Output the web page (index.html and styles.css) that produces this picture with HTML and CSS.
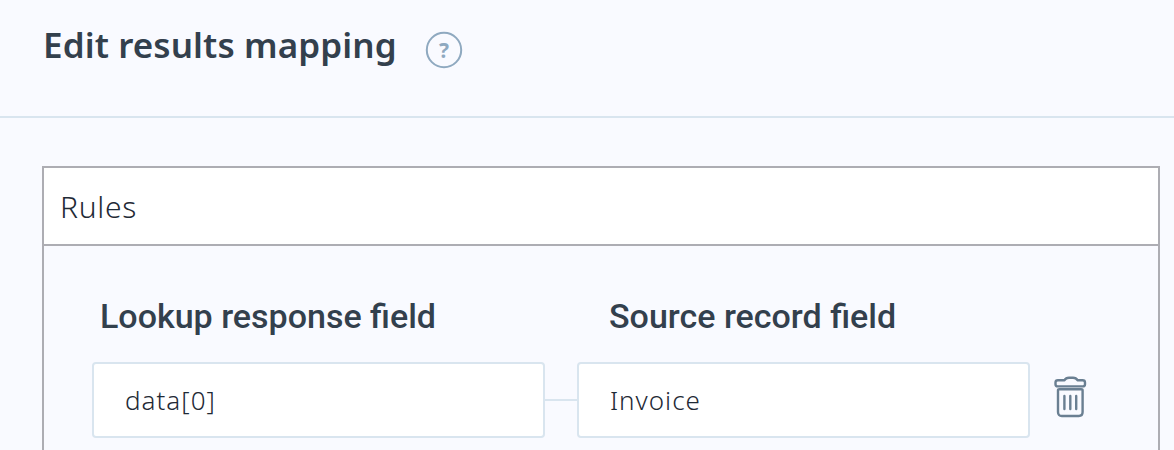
FILE: index.html
```html
<!DOCTYPE html>
<html lang="en">
<head>
<meta charset="utf-8">
<title>Edit results mapping</title>
<link rel="stylesheet" href="styles.css">
</head>
<body>
<header class="page-header">
  <h1 class="title">Edit results mapping</h1>
  <svg class="help" width="38" height="38" viewBox="0 0 38 38" aria-hidden="true">
    <circle cx="19" cy="19" r="17.2" fill="none" stroke="#8fa9c0" stroke-width="2"/>
    <text x="19" y="26.5" text-anchor="middle" class="help-mark">?</text>
  </svg>
</header>
<main class="content">
  <section class="panel">
    <div class="panel-title">Rules</div>
    <div class="panel-body">
      <div class="labels">
        <div class="label label-a">Lookup response field</div>
        <div class="label">Source record field</div>
      </div>
      <div class="row">
        <div class="field">data[0]</div>
        <div class="link"></div>
        <div class="field">Invoice</div>
        <svg class="trash" width="34" height="42" viewBox="0 0 34 42" aria-hidden="true">
          <g fill="none" stroke="#6a7f92" stroke-width="2.4" stroke-linecap="round" stroke-linejoin="round">
            <path d="M10.5 4.2 C11.5 2.4 13 1.8 15 1.8 H19 C21 1.8 22.5 2.4 23.5 4.2 H28.5 C30.2 4.2 31 5 31 6.4 V8.2 C31 9.6 30.3 10.4 28.8 10.4 H3.7 C2.2 10.4 1.5 9.6 1.5 8.2 V6.4 C1.5 5 2.3 4.2 4 4.2 Z"/>
            <path d="M4 14.4 C4 13.6 4.6 13.2 5.4 13.2 H27.2 C28 13.2 28.6 13.6 28.6 14.4 V36 C28.6 38.6 27.2 40 24.8 40 H7.8 C5.4 40 4 38.6 4 36 Z"/>
            <path d="M10.4 20 V33 M16.3 20 V33 M22.2 20 V33"/>
          </g>
        </svg>
      </div>
    </div>
  </section>
</main>
</body>
</html>
```
FILE: styles.css
```css
html, body {
  margin: 0;
  padding: 0;
  height: 450px;
  overflow: hidden;
  background: #f9faff;
  color: #33404d;
  font-family: "Noto Sans", "Open Sans", sans-serif;
}
.page-header {
  box-sizing: border-box;
  height: 118px;
  padding: 0 0 0 43px;
  display: flex;
  align-items: flex-start;
  border-bottom: 2px solid #d9e5ef;
}
.title {
  margin: 23px 0 0;
  font-size: 35px;
  line-height: 44px;
  font-weight: 600;
  letter-spacing: 0.1px;
  color: #33404d;
}
.help {
  margin: 31px 0 0 28px;
}
.help-mark {
  font-family: "Noto Sans", sans-serif;
  font-size: 21px;
  font-weight: 700;
  fill: #8fa9c0;
}
.content {
  padding: 48px 14px 0 42px;
}
.panel {
  border: 2px solid #adadb3;
  border-bottom: 0;
  height: 300px;
}
.panel-title {
  box-sizing: border-box;
  height: 78px;
  background: #fff;
  border-bottom: 2px solid #adadb3;
  padding: 0 0 0 16px;
  font-size: 30px;
  font-weight: 300;
  line-height: 78px;
  letter-spacing: 0.7px;
  color: #1f2a36;
}
.panel-body {
  padding: 48px 0 0 48px;
}
.labels {
  display: flex;
  height: 44px;
  font-family: Roboto, sans-serif;
  font-weight: 500;
  font-size: 34px;
  line-height: 44px;
  color: #33404d;
}
.label-a {
  width: 517px;
  padding-left: 8px;
  box-sizing: border-box;
}
.row {
  display: flex;
  align-items: center;
  margin-top: 24px;
}
.field {
  box-sizing: border-box;
  width: 453px;
  height: 76px;
  background: #fff;
  border: 2px solid #d9e5ef;
  border-radius: 4px;
  padding-left: 31px;
  font-size: 26px;
  font-weight: 300;
  line-height: 73px;
  letter-spacing: 1px;
  color: #1f2a36;
}
.link {
  width: 32px;
  height: 2px;
  background: #d9e5ef;
}
.trash {
  margin: 0 0 6px 24px;
}
```
